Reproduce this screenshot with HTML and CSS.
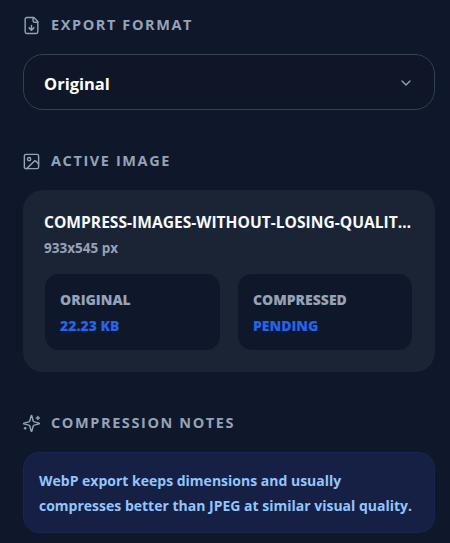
FILE: index.html
```html
<!DOCTYPE html>
<html lang="en">
<head>
<meta charset="utf-8">
<title>Compression settings</title>
<link rel="stylesheet" href="styles.css">
</head>
<body>
<main class="panel">
  <section class="group group-format">
    <h2 class="heading">
      <svg class="icon" viewBox="0 0 24 24"><path d="M15 2H6a2 2 0 0 0-2 2v16a2 2 0 0 0 2 2h12a2 2 0 0 0 2-2V7z"/><path d="M14 2v4a2 2 0 0 0 2 2h4"/><path d="M12 18v-6"/><path d="m9 15 3 3 3-3"/></svg>
      <span>EXPORT FORMAT</span>
    </h2>
    <div class="select">
      <span>Original</span>
      <svg class="chevron" viewBox="0 0 24 24"><path d="m6 9 6 6 6-6"/></svg>
    </div>
  </section>
  <section class="group group-image">
    <h2 class="heading">
      <svg class="icon" viewBox="0 0 24 24"><rect x="3" y="3" width="18" height="18" rx="2"/><circle cx="9" cy="9" r="2"/><path d="m21 15-3.086-3.086a2 2 0 0 0-2.828 0L6 21"/></svg>
      <span>ACTIVE IMAGE</span>
    </h2>
    <div class="card">
      <div class="filename">COMPRESS-IMAGES-WITHOUT-LOSING-QUALITY.PNG</div>
      <div class="dims">933x545 px</div>
      <div class="stats">
        <div class="stat"><div class="stat-label">ORIGINAL</div><div class="stat-value">22.23 KB</div></div>
        <div class="stat"><div class="stat-label">COMPRESSED</div><div class="stat-value">PENDING</div></div>
      </div>
    </div>
  </section>
  <section class="group">
    <h2 class="heading">
      <svg class="icon" viewBox="0 0 24 24"><path d="M9.937 15.5A2 2 0 0 0 8.5 14.063l-6.135-1.582a.5.5 0 0 1 0-.962L8.5 9.936A2 2 0 0 0 9.937 8.5l1.582-6.135a.5.5 0 0 1 .963 0L14.063 8.5A2 2 0 0 0 15.5 9.937l6.135 1.581a.5.5 0 0 1 0 .964L15.5 14.063a2 2 0 0 0-1.437 1.437l-1.582 6.135a.5.5 0 0 1-.963 0z"/><path d="M20 3v4"/><path d="M22 5h-4"/><path d="M4 17v2"/><path d="M5 18H3"/></svg>
      <span>COMPRESSION NOTES</span>
    </h2>
    <p class="note">WebP export keeps dimensions and usually compresses better than JPEG at similar visual quality.</p>
  </section>
</main>
</body>
</html>
```

FILE: styles.css
```css
* { box-sizing: border-box; }
html, body { margin: 0; height: 100%; }
body {
  background: #0f172a;
  color: #f8fafc;
  font-family: "Open Sans", "Noto Sans", sans-serif;
  overflow: hidden;
}
.panel {
  padding: 15px 15px 0 22px;
  display: flex;
  flex-direction: column;
}
.group-format { margin-bottom: 41px; }
.group-image { margin-bottom: 41px; }
.heading {
  margin: 0 0 19px;
  height: 20px;
  display: flex;
  align-items: center;
  gap: 10px;
  color: #94a3b8;
  font-size: 14.5px;
  font-weight: 700;
  letter-spacing: 1.6px;
  line-height: 20px;
}
.icon {
  width: 19px;
  height: 19px;
  flex: none;
  fill: none;
  stroke: #94a3b8;
  stroke-width: 1.8;
  stroke-linecap: round;
  stroke-linejoin: round;
}
.select {
  margin-left: 1px;
  height: 56px;
  padding: 2px 21px 0 20px;
  display: flex;
  align-items: center;
  justify-content: space-between;
  border: 1px solid #334155;
  border-radius: 20px;
  background: #0e1628;
  color: #fff;
  font-size: 16.5px;
  font-weight: 700;
}
.chevron {
  width: 16px;
  height: 16px;
  margin: 0 -1px 0 0;
  fill: none;
  stroke: #94a3b8;
  stroke-width: 2;
  stroke-linecap: round;
  stroke-linejoin: round;
}
.card {
  margin-left: 1px;
  height: 182px;
  padding: 21px 22px 22px 21px;
  border-radius: 20px;
  background: #1a2435;
}
.filename {
  height: 22px;
  color: #f8fafc;
  font-size: 15.6px;
  font-weight: 700;
  line-height: 22px;
  white-space: nowrap;
  overflow: hidden;
  text-overflow: ellipsis;
}
.dims {
  margin-top: 6px;
  height: 18px;
  color: #94a3b8;
  font-size: 13.5px;
  font-weight: 700;
  line-height: 18px;
}
.stats {
  margin-top: 17px;
  margin-left: 1px;
  display: grid;
  grid-template-columns: 175px 174px;
  gap: 18px;
}
.stat {
  height: 76px;
  padding: 17px 15px;
  border-radius: 14px;
  background: #0f172a;
}
.stat-label {
  color: #94a3b8;
  font-size: 14px;
  font-weight: 800;
  line-height: 18px;
}
.stat-value {
  margin-top: 8px;
  color: #2563eb;
  font-size: 14px;
  font-weight: 800;
  line-height: 18px;
}
.note {
  margin: 0 0 0 1px;
  height: 81px;
  padding: 15px 20px 15px 15px;
  border: 1px solid #1a2550;
  border-radius: 16px;
  background: #162044;
  color: #93c5fd;
  font-size: 14px;
  font-weight: 700;
  line-height: 25px;
}
```
